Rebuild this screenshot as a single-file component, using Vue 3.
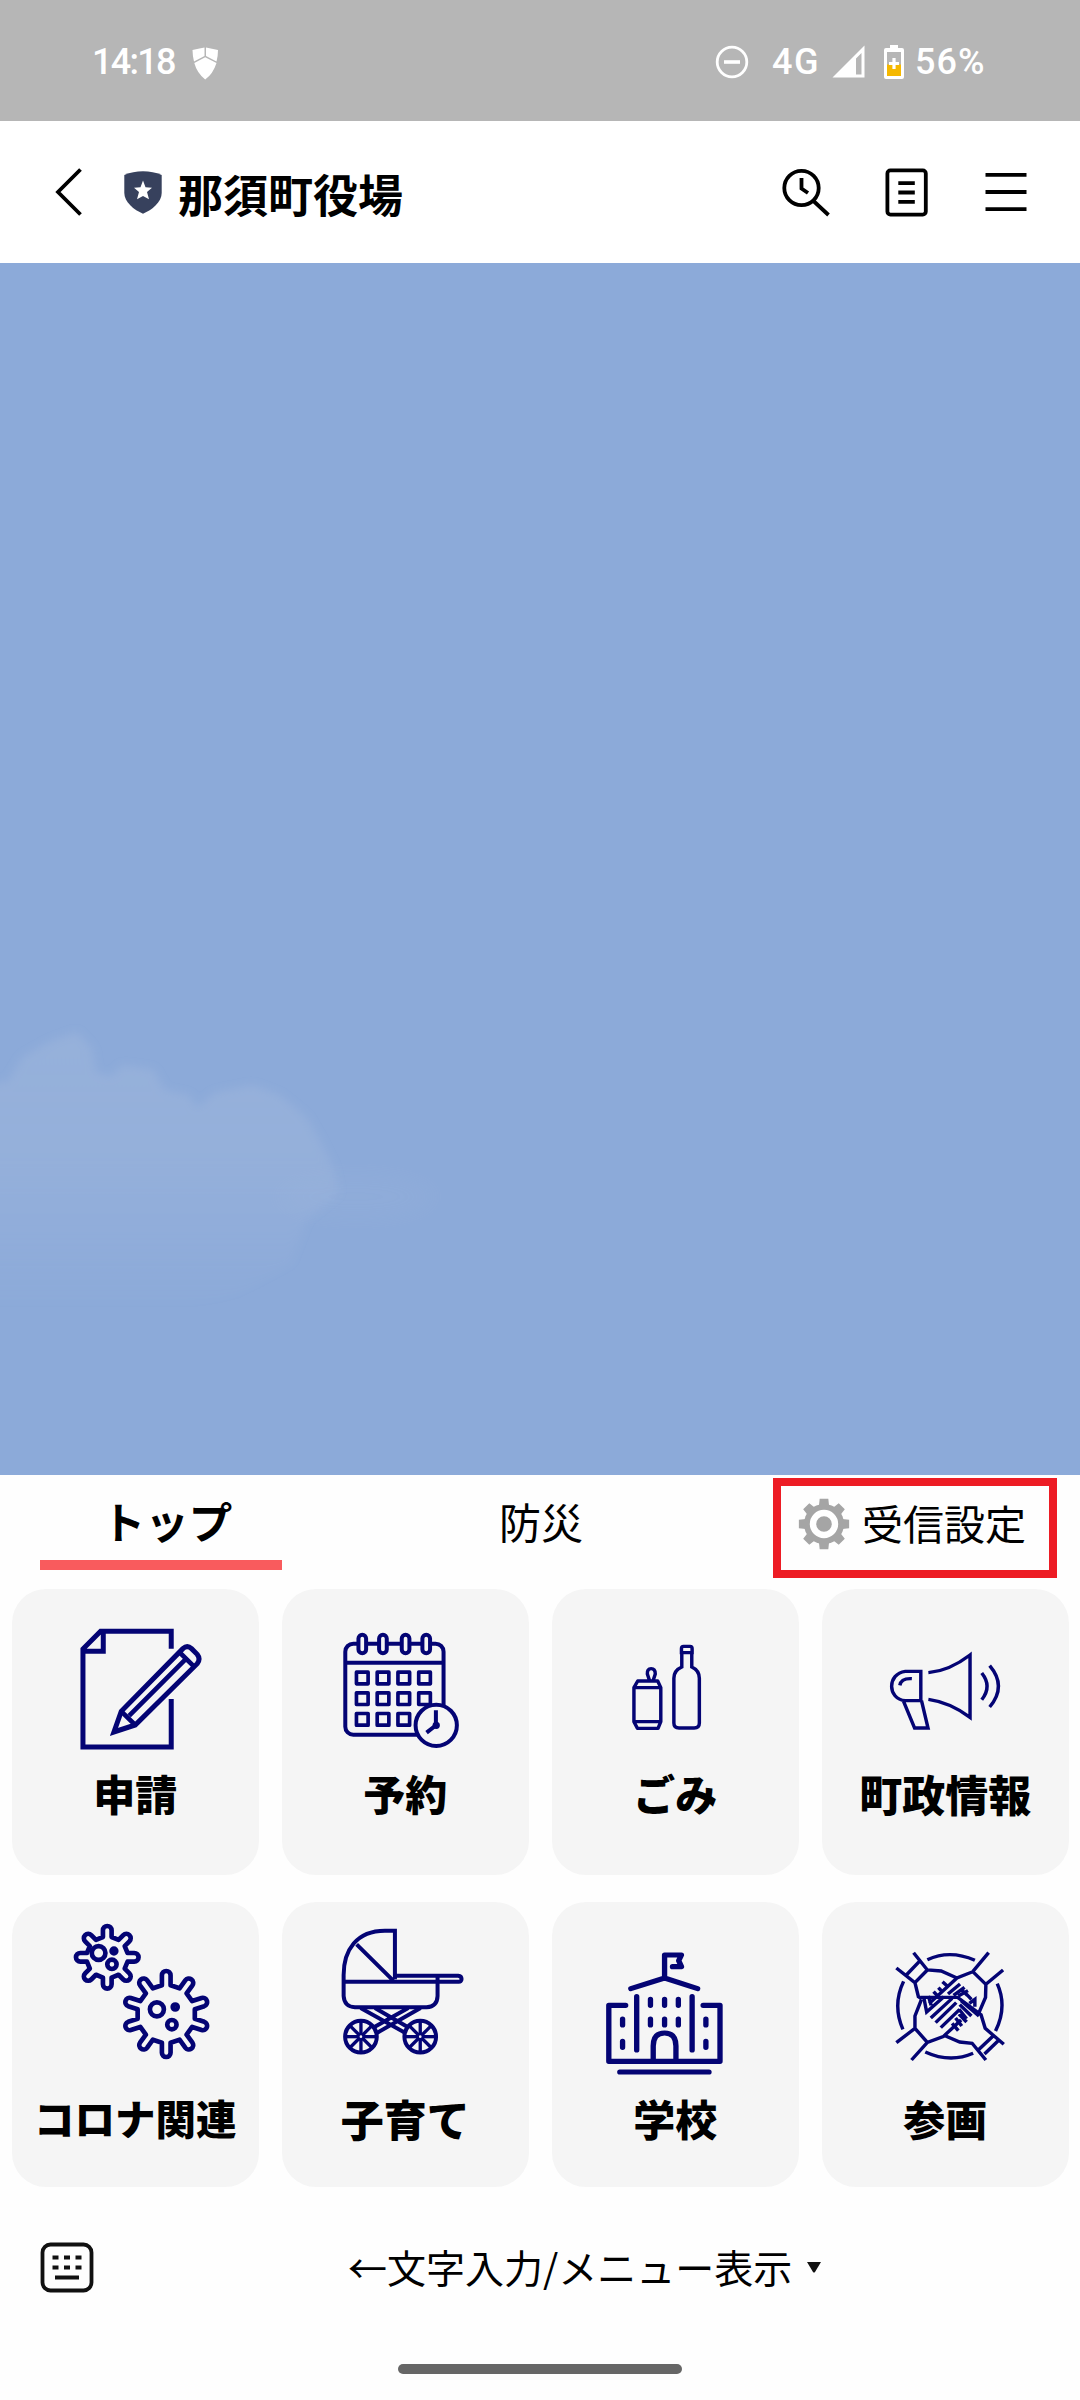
<script setup>
const tabs = [
  { label: 'トップ', kind: 'active' },
  { label: '防災', kind: 'plain' },
]

// Outline of a round germ with evenly spaced, round-tipped spikes.
function germ(cx, cy, count, base, tip, w) {
  let d = ''
  for (let i = 0; i < count; i++) {
    const a = (i * 2 * Math.PI) / count
    const at = (x, r) => {
      const px = cx + x * Math.cos(a) + r * Math.sin(a)
      const py = cy + x * Math.sin(a) - r * Math.cos(a)
      return `${px.toFixed(1)} ${py.toFixed(1)}`
    }
    d += `${i ? 'L' : 'M'}${at(-w, base)}L${at(-w, tip - w)}A${w} ${w} 0 0 1 ${at(w, tip - w)}L${at(w, base)}`
  }
  return d + 'Z'
}

// Toothed wheel used by the settings tab.
function gear(c, outer, inner, teeth) {
  const pts = []
  for (let i = 0; i < teeth; i++) {
    const a = (i * 2 * Math.PI) / teeth - Math.PI / 2
    for (const [off, r] of [[-0.27, inner], [-0.17, outer], [0.17, outer], [0.27, inner]]) {
      pts.push(`${(c + r * Math.cos(a + off)).toFixed(2)},${(c + r * Math.sin(a + off)).toFixed(2)}`)
    }
  }
  return pts.join(' ')
}

const smallGerm = germ(322, 202, 8, 61, 94, 13)
const bigGerm = germ(499, 372, 10, 86, 129, 13)
const gearPoints = gear(26, 25.5, 19, 8)

const cells = []
for (let r = 0; r < 3; r++) {
  for (let c = 0; c < 4; c++) {
    if (r === 2 && c === 3) continue
    cells.push({ x: 259.5 + c * 62.3, y: 277.5 + r * 62 })
  }
}
const rings = [277, 339, 407, 469]
const wheels = [273, 451]
const spokes = [0, 45, 90, 135]
</script>

<template>
  <div class="phone">
    <header class="status">
      <span class="clock">14:18</span>
      <svg class="guard" width="27" height="33" viewBox="0 0 27 33">
        <path fill="#fff" d="M.5 3Q6 2 12.500 .6V9L2 14.500Q.6 9 .5 3ZM14 .600Q20 2 26 3Q26 9 24.500 14.500L14 9ZM2.300 16L13.200 10.300L24.500 16Q21 27 13.200 32.500Q5 26 2.300 16Z" />
      </svg>
      <span class="spacer"></span>
      <svg class="dnd" width="34" height="34" viewBox="0 0 34 34" fill="none" stroke="#fff">
        <circle cx="17" cy="17" r="14.800" stroke-width="2.800" />
        <path d="M9 17H25" stroke-width="3.600" />
      </svg>
      <span class="net">4G</span>
      <svg class="signal" width="33" height="33" viewBox="0 0 33 33">
        <path fill="#fff" fill-rule="evenodd" d="M32.500.500V32.500H.500ZM29.500 8L24 13.500V29.500H29.500Z" />
      </svg>
      <svg class="battery" width="20" height="34" viewBox="0 0 20 34">
        <path fill="#fff" fill-rule="evenodd" d="M6 0H14V3H18Q20 3 20 5V32Q20 34 18 34H2Q0 34 0 32V5Q0 3 2 3H6ZM3 7V31H17V7Z" />
        <rect x="3" y="19.500" width="14" height="11.500" fill="#f5b800" />
        <path d="M10 13V24M5 18.500H15" stroke="#fff" stroke-width="3.200" />
      </svg>
      <span class="percent">56%</span>
    </header>

    <nav class="bar">
      <svg class="back" width="28" height="50" viewBox="0 0 28 50" fill="none" stroke="#000" stroke-width="3.800">
        <path d="M25.500 2.500L3 25L25.500 47.500" />
      </svg>
      <svg class="badge" width="38" height="43" viewBox="0 0 38 43">
        <path fill="#37415d" d="M.300 4Q9 .300 19 .300T37.700 4V22C37.700 31 28 39 19 42.700C10 39 .300 31 .300 22Z" />
        <path fill="#fff" d="M19 9.500L21.500 16.300L28 16.700L23 21L25 28.200L19 25L13 28.200L15 21L10 16.700L16.500 16.300Z" />
      </svg>
      <h1 class="title">那須町役場</h1>
      <span class="spacer"></span>
      <svg class="search" width="50" height="50" viewBox="0 0 50 50" fill="none" stroke="#000" stroke-width="3.800">
        <circle cx="20.500" cy="21" r="17.200" />
        <path d="M20.500 11V21.500L27 26M32.500 34L47.500 48" />
      </svg>
      <svg class="doc" width="43" height="49" viewBox="0 0 43 49" fill="none" stroke="#000" stroke-width="3.800">
        <rect x="2.400" y="2.400" width="38.400" height="44.200" rx="3" />
        <path d="M13.300 15.200H29.800M13.300 24.500H29.800M13.300 33.800H29.800" />
      </svg>
      <svg class="menu" width="42" height="40" viewBox="0 0 42 40" stroke="#000" stroke-width="3.800">
        <path d="M.500 2.800H41.500M.500 20H41.500M.500 37.200H41.500" />
      </svg>
    </nav>

    <main class="chat">
      <svg class="cloud" width="600" height="350" viewBox="0 0 1568 1050" preserveAspectRatio="none">
        <defs>
          <linearGradient id="fade" x1="0" y1="0" x2="0" y2="1">
            <stop offset="0" stop-color="#b5c5e0" stop-opacity=".24" />
            <stop offset=".45" stop-color="#b5c5e0" stop-opacity=".21" />
            <stop offset="1" stop-color="#b5c5e0" stop-opacity="0" />
          </linearGradient>
          <filter id="soft" x="-10%" y="-10%" width="120%" height="120%"><feGaussianBlur stdDeviation="12" /></filter>
          <filter id="haze" x="-30%" y="-60%" width="160%" height="220%"><feGaussianBlur stdDeviation="35" /></filter>
        </defs>
        <path filter="url(#soft)" fill="url(#fade)" d="M-60 310L20 305L60 230L130 185L200 155L240 205L250 275L290 290L320 255L400 268L430 330L495 345L515 385L560 338L660 315L730 345L800 410L835 480L870 560L885 640L800 720L760 850L620 940L500 980L-60 980Z" />
        <ellipse filter="url(#haze)" cx="930" cy="650" rx="210" ry="70" fill="#b5c5e0" opacity=".07" />
      </svg>
    </main>

    <section class="tabs">
      <div v-for="t in tabs" :key="t.label" class="tab" :class="t.kind">
        <span>{{ t.label }}</span>
      </div>
      <div class="tab settings">
        <svg width="52" height="52" viewBox="0 0 52 52">
          <circle cx="26" cy="26" r="20" fill="#a5a5a5" />
          <polygon :points="gearPoints" fill="#a5a5a5" />
          <circle cx="26" cy="26" r="11" fill="none" stroke="#fff" stroke-width="6.400" />
        </svg>
        <span>受信設定</span>
      </div>
    </section>

    <section class="grid">
      <div class="card">
        <svg viewBox="36 28 740 510" preserveAspectRatio="none" stroke-width="15">
          <path d="M514 207V155H302L249 208V502H514V358M310 155V215H249" />
          <path d="M342 457L364 395L549 207Q562 195 575 207L592 224Q603 238 592 252L406 436Z" stroke-width="15" />
          <path d="M364 395L406 436M388 408L556 240M541 220L582 260" stroke-width="14" />
        </svg>
        <span>申請</span>
      </div>
      <div class="card">
        <svg viewBox="36 28 740 510" preserveAspectRatio="none" stroke-width="12">
          <rect x="226" y="192" width="295" height="273" rx="24" />
          <path d="M226 249H521" />
          <rect v-for="x in rings" :key="x" class="solid" :x="x - 11.500" y="165" width="23" height="56" rx="11.500" />
          <rect v-for="(c, i) in cells" :key="i" :x="c.x" :y="c.y" width="35" height="35" stroke-width="11" stroke-linejoin="round" />
          <circle class="solid" cx="499" cy="437" r="62" />
          <path d="M498 392V437L470 459" />
          <circle cx="499" cy="437" r="5" />
        </svg>
        <span>予約</span>
      </div>
      <div class="card">
        <svg viewBox="35 28 716 510" preserveAspectRatio="none" stroke-width="10">
          <path stroke-linejoin="round" d="M284 304H342L351 324V426L343 446H283L273 426V324ZM273 324H351M273 426H351M318 302L312 283Q311 267 323 267T335 283L329 302" />
          <path d="M411 219V207Q411 200 417 200H436Q442 200 442 207V219ZM412 219V262Q389 272 389 296V430Q389 445 404 445H448Q463 445 463 430V296Q463 272 441 262V219" />
        </svg>
        <span>ごみ</span>
      </div>
      <div class="card">
        <svg viewBox="818 28 716 510" preserveAspectRatio="none" stroke-width="10">
          <path d="M1105 275H1060C1007 282 1007 358 1060 363H1105ZM1054 363L1087 445H1126L1107 363" />
          <path d="M1044 317Q1048 295 1079 297M1127 279Q1187 274 1248 226V413Q1190 368 1127 359M1282 280Q1313 320 1282 360M1305 258Q1356 320 1305 382" />
        </svg>
        <span class="four">町政情報</span>
      </div>
      <div class="card low">
        <svg viewBox="36 36 740 555" preserveAspectRatio="none" stroke-width="14" stroke-linejoin="round">
          <path :d="smallGerm" />
          <path :d="bigGerm" />
          <circle cx="296" cy="189" r="20.500" />
          <circle cx="336" cy="223" r="14" />
          <circle cx="342" cy="183" r="7" />
          <circle cx="471" cy="358" r="21" />
          <circle cx="516" cy="404" r="14" />
          <circle cx="526" cy="351" r="7.500" />
        </svg>
        <span class="five">コロナ関連</span>
      </div>
      <div class="card low">
        <svg viewBox="36 36 740 555" preserveAspectRatio="none" stroke-width="12">
          <path d="M375 268V122H345C260 122 221 180 221 255V318Q223 350 255 352H470Q502 350 503 318V262M375 257H565Q575 258 575 267T565 275H221M260 163L370 272" />
          <path d="M272 354L405 428M315 354L412 410M415 354L312 412M452 354L322 428" />
          <g v-for="x in wheels" :key="x" :transform="`translate(${x} 440)`">
            <circle class="solid" r="47.500" />
            <path v-for="s in spokes" :key="s" d="M-46 0H46" :transform="`rotate(${s})`" stroke-width="10" />
            <circle r="8" class="solid" stroke-width="8" />
          </g>
        </svg>
        <span class="three">子育て</span>
      </div>
      <div class="card low">
        <svg viewBox="35 36 716 555" preserveAspectRatio="none" stroke-width="15.500" stroke-linecap="round" stroke-linejoin="round">
          <path d="M362 262V195H411L403 212L411 230H385M264 296L362 264L458 296M249 346H200V514H523V346H474M281 320V480M442 320V480M329 514V468Q329 429 362 429T395 468V514M232 546H491" />
          <path d="M321 328V346M362 328V346M402 328V346M321 387V405M362 387V405M402 387V405M240 387V405M482 387V405M240 454V472M482 454V472" />
        </svg>
        <span>学校</span>
      </div>
      <div class="card low">
        <svg viewBox="818 36 716 555" preserveAspectRatio="none" stroke-width="10">
          <path d="M1124 209Q1190 178 1262 211M1327 281Q1357 350 1322 423M1257 490Q1190 520 1118 486M1055 274Q1022 345 1053 418" />
          <path d="M1084 188L1124 240L1164 243L1210 264M1034 234L1088 278L1098 320L1107 326M1103 212L1063 255M1124 240L1088 278" />
          <path d="M1302 188L1256 245L1210 264L1130 340M1344 240L1294 283L1293 322L1274 368M1256 245L1294 283" />
          <path d="M1034 458L1088 415V378L1107 328M1078 510L1124 457L1170 440L1222 390M1088 415L1124 457" />
          <path d="M1346 463L1292 415L1280 374L1212 322H1104M1294 510L1254 460L1218 456L1172 436M1315 438L1272 480M1332 450L1290 492" />
          <path d="M1114 324L1122 366L1172 320M1134 384L1196 325M1148 398L1208 338M1163 413L1218 358M1127 318L1135 346M1142 305L1154 318M1156 293L1168 306M1168 275L1184 290M1184 312L1219 282M1200 316L1232 292M1214 318L1242 302M1236 311L1252 328M1222 298L1240 316M1246 340L1262 328V350M1222 332L1274 378M1218 344L1252 378M1216 358L1238 386M1216 372L1238 396M1206 384L1224 408M1196 400L1214 422" />
        </svg>
        <span>参画</span>
      </div>
    </section>

    <footer class="foot">
      <svg class="keys" width="54" height="51" viewBox="0 0 54 51" fill="none" stroke="#111">
        <rect x="2.500" y="2.500" width="49" height="46" rx="8" stroke-width="3.800" />
        <path d="M12.500 15.500H42.500M12.500 25.500H42.500" stroke-width="4.200" stroke-dasharray="6 5.500" />
        <path d="M15 35.500H39" stroke-width="4" />
      </svg>
      <span class="hint">←文字入力/メニュー表示</span>
      <svg class="caret" width="14" height="11" viewBox="0 0 14 11"><path fill="#111" d="M0 0H14L8 10Q7 11 6 10Z" /></svg>
    </footer>
    <div class="home"></div>
  </div>
</template>

<style>
body {
  background: #fff;
}
</style>

<style scoped>
.phone {
  width: 1080px;
  height: 2400px;
  display: flex;
  flex-direction: column;
  background: #fefefe;
  color: #000;
  font-family: "Noto Sans CJK JP", "Liberation Sans", sans-serif;
  overflow: hidden;
}
svg {
  display: block;
  flex: none;
}
.spacer {
  flex: 1;
}
.status {
  box-sizing: border-box;
  height: 121px;
  padding: 2px 93px 0 92px;
  display: flex;
  align-items: center;
  background: #b6b6b6;
  color: #fff;
  font: 500 36px/40px Roboto, sans-serif;
  white-space: nowrap;
}
.clock {
  width: 84px;
  letter-spacing: -1.7px;
}
.guard {
  margin: 3px 0 0 16px;
}
.net {
  margin-left: 23px;
  width: 49px;
  letter-spacing: 1.5px;
}
.signal {
  margin-left: 11px;
}
.battery {
  margin-left: 19px;
}
.percent {
  margin-left: 11px;
  width: 72px;
  letter-spacing: 1px;
}
.bar {
  box-sizing: border-box;
  height: 142px;
  padding: 0 53px 0 55px;
  display: flex;
  align-items: center;
  background: #fff;
}
.badge {
  margin-left: 41px;
}
.title {
  margin: 3px 0 0 16px;
  font-size: 45px;
  line-height: 60px;
  font-weight: 700;
}
.doc {
  margin-left: 54px;
}
.menu {
  margin-left: 57px;
}
.chat {
  height: 1212px;
  background: #8caad9;
}
.cloud {
  margin-top: 717px;
}
.tabs {
  box-sizing: border-box;
  height: 114px;
  padding: 3px 23px 0 40px;
  display: flex;
  align-items: flex-start;
}
.tab {
  box-sizing: border-box;
  font-size: 41px;
  line-height: 48px;
  text-align: center;
  white-space: nowrap;
}
.active {
  width: 242px;
  height: 92px;
  padding: 19px 0 0 12px;
  border-bottom: 10px solid #f95b5d;
  font-weight: 700;
  font-size: 43.500px;
}
.plain {
  width: 242px;
  margin-left: 138px;
  padding-top: 19px;
  font-size: 42px;
}
.settings {
  width: 284px;
  height: 100px;
  margin-left: auto;
  border: 8px solid #ed1c24;
  display: flex;
  padding: 12px 0 0 17px;
}
.settings span {
  margin-left: 12px;
}
.grid {
  display: grid;
  grid-template-columns: repeat(4, 246.500px);
  grid-auto-rows: 285.500px;
  gap: 27px 23.500px;
  padding-left: 12px;
}
.card {
  border-radius: 34px;
  background: #f5f5f5;
}
.card svg {
  width: 246.500px;
  height: 170px;
  fill: none;
  stroke: #040474;
}
.card.low svg {
  height: 185px;
}
.card svg .solid {
  fill: #f5f5f5;
}
.card span {
  display: block;
  text-align: center;
  font-size: 42px;
  line-height: 68px;
  font-weight: 900;
}
.card.low span {
  line-height: 62px;
}
.card .four {
  font-size: 43px;
}
.card .five {
  font-size: 40.500px;
}
.card .three {
  font-size: 43px;
}
.foot {
  height: 160px;
  display: flex;
  align-items: center;
  padding-left: 40px;
}
.hint {
  margin: -3px 0 0 254px;
  font-size: 39px;
  line-height: 50px;
  white-space: nowrap;
}
.caret {
  margin-left: 15px;
}
.home {
  width: 284px;
  height: 10px;
  margin: 17px auto 0;
  border-radius: 5px;
  background: #666;
}
</style>
